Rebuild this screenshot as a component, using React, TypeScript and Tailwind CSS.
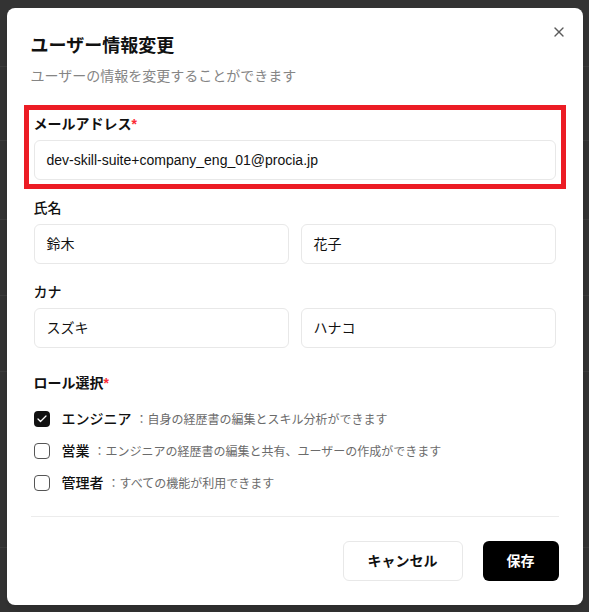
import { X, Check } from "lucide-react";

const FONT = {
  fontFamily: '"Liberation Sans", "Noto Sans CJK JP", sans-serif',
};

const roles = [
  { key: "engineer", name: "エンジニア", desc: "自身の経歴書の編集とスキル分析ができます", checked: true },
  { key: "sales", name: "営業", desc: "エンジニアの経歴書の編集と共有、ユーザーの作成ができます", checked: false },
  { key: "admin", name: "管理者", desc: "すべての機能が利用できます", checked: false },
];

function TextInput({ value }: { value: string }) {
  return (
    <div className="mt-1.5 flex h-10 w-full items-center rounded-md border border-[#e8e8e8] bg-white px-3 text-sm text-[#111]">
      {value}
    </div>
  );
}

function RoleCheckbox({ checked }: { checked: boolean }) {
  if (checked) {
    return (
      <span className="flex h-4 w-4 shrink-0 items-center justify-center rounded-[4px] bg-[#111]">
        <Check className="h-3 w-3 text-white" strokeWidth={2.5} />
      </span>
    );
  }
  return <span className="h-4 w-4 shrink-0 rounded-[4px] border border-[#555]" />;
}

export default function App() {
  return (
    <div className="relative h-[612px] w-full overflow-hidden bg-[#333]" style={FONT}>
      {/* 背景のページ */}
      <div className="flex flex-col">
        <div className="h-[66px]" />
        <div className="h-[74px] border-t border-[#3d3d3d]" />
        <div className="h-[79px] border-t border-[#3d3d3d]" />
        <div className="h-[76px] border-t border-[#3d3d3d]" />
        <div className="h-[76px] border-t border-[#3d3d3d]" />
        <div className="h-[176px] border-t border-[#3d3d3d]" />
        <div className="border-t border-[#3d3d3d]" />
      </div>

      {/* ダイアログ */}
      <div className="absolute inset-0 flex items-center justify-center">
        <div className="relative w-full max-w-xl rounded-lg bg-white p-6 shadow-lg">
          <button className="absolute right-4 top-4 text-[#333] opacity-80">
            <X className="h-4 w-4" />
          </button>

          {/* ヘッダー */}
          <div className="flex flex-col gap-1.5">
            <h2 className="text-lg font-bold leading-7 text-[#111]">ユーザー情報変更</h2>
            <p className="text-sm text-[#858585]">ユーザーの情報を変更することができます</p>
          </div>

          {/* フォーム */}
          <div className="mt-7 flex flex-col gap-[18px] px-[3px]">
            {/* メールアドレス */}
            <div className="relative">
              <div className="pointer-events-none absolute -inset-x-[10px] -inset-y-[9px] border-[5px] border-[#ec1c24]" />
              <label className="block text-sm font-bold text-[#111]">
                メールアドレス<span className="text-red-500">*</span>
              </label>
              <TextInput value="dev-skill-suite+company_eng_01@procia.jp" />
            </div>

            {/* 氏名 */}
            <div>
              <label className="block text-sm font-medium text-[#111]">氏名</label>
              <div className="grid grid-cols-2 gap-3">
                <TextInput value="鈴木" />
                <TextInput value="花子" />
              </div>
            </div>

            {/* カナ */}
            <div>
              <label className="block text-sm font-medium text-[#111]">カナ</label>
              <div className="grid grid-cols-2 gap-3">
                <TextInput value="スズキ" />
                <TextInput value="ハナコ" />
              </div>
            </div>

            {/* ロール選択 */}
            <div className="pt-[7px]">
              <label className="block text-sm font-bold text-[#111]">
                ロール選択<span className="text-red-500">*</span>
              </label>
              <div className="mt-4 flex flex-col gap-3">
                {roles.map((role) => (
                  <div key={role.key} className="flex h-5 items-center gap-3">
                    <RoleCheckbox checked={role.checked} />
                    <span className="text-sm font-medium text-[#111]">
                      {role.name}
                      <span className="ml-1 text-xs font-normal text-[#6b6b6b]">：{role.desc}</span>
                    </span>
                  </div>
                ))}
              </div>
            </div>
          </div>

          {/* フッター */}
          <div className="mt-[23px] flex justify-end gap-5 border-t border-[#ececec] pt-6">
            <button className="h-10 rounded-md border border-[#e8e8e8] bg-white px-6 text-sm font-bold text-[#111]">
              キャンセル
            </button>
            <button className="h-10 rounded-md bg-black px-6 text-sm font-bold text-white">保存</button>
          </div>
        </div>
      </div>
    </div>
  );
}
